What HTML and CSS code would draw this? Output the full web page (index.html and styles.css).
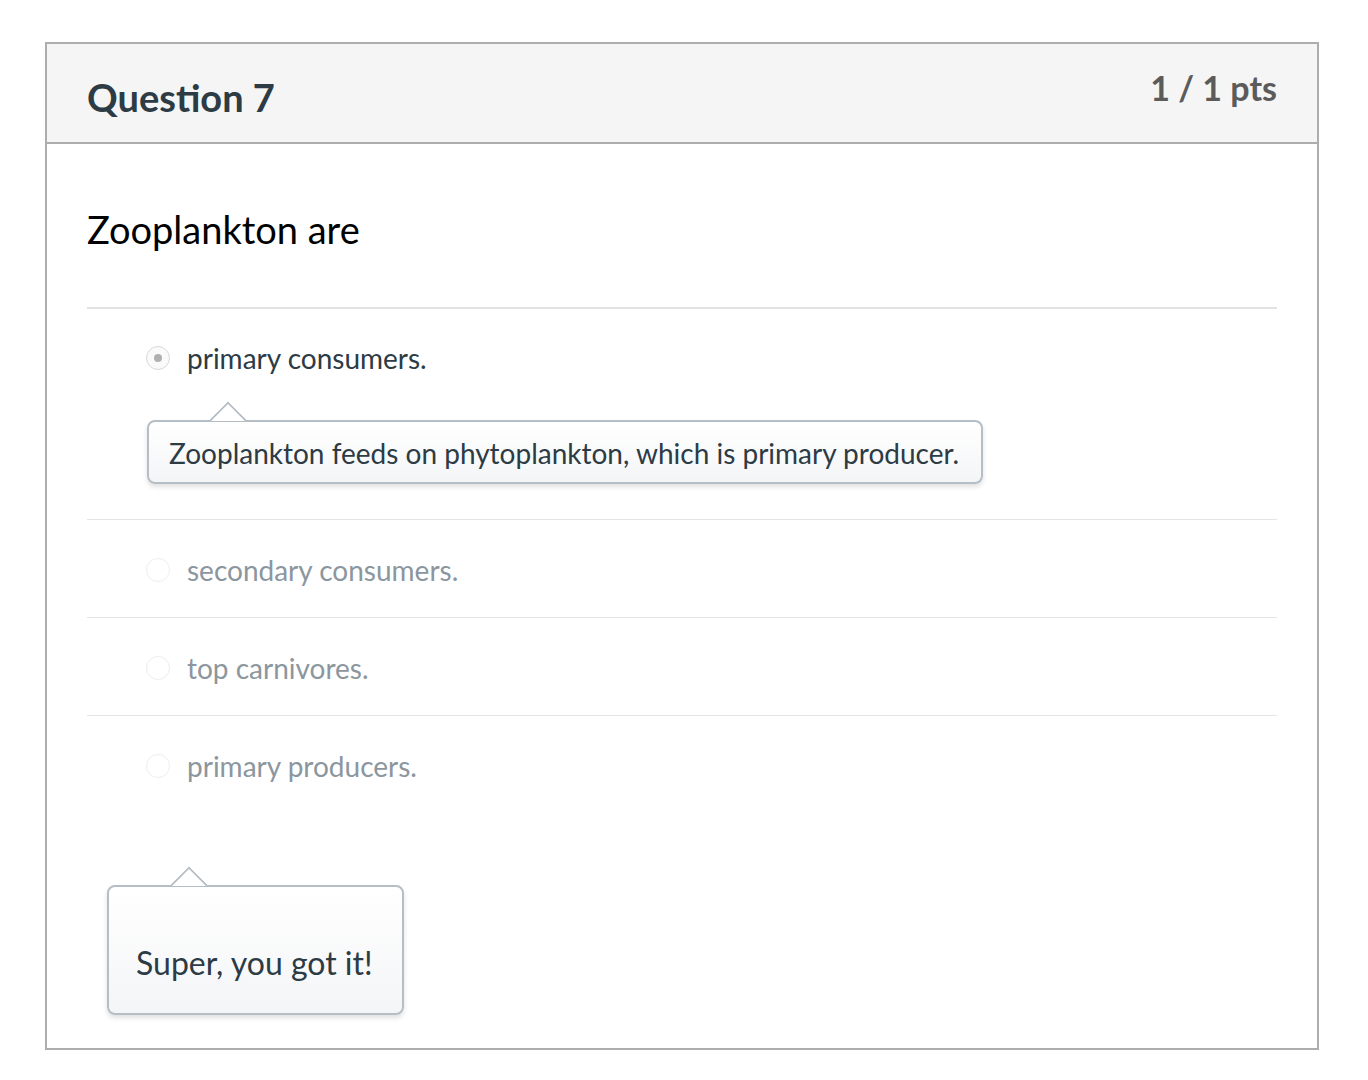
FILE: index.html
```html
<!DOCTYPE html>
<html>
<head>
<meta charset="utf-8">
<link rel="stylesheet" href="styles.css">
</head>
<body>
<div class="question">
  <div class="q-header">
    <h2 class="q-title">Question 7</h2>
    <div class="q-points">1 / 1 pts</div>
  </div>
  <div class="q-body">
    <div class="q-text">Zooplankton are</div>
    <div class="answers">
      <div class="answer selected">
        <div class="answer-row">
          <span class="radio"><span class="dot"></span></span>
          <span class="answer-label">primary consumers.</span>
        </div>
        <div class="bubble comment">
          <span class="arrow"></span>
          Zooplankton feeds on phytoplankton, which is primary producer.
        </div>
      </div>
      <div class="answer">
        <div class="answer-row">
          <span class="radio"></span>
          <span class="answer-label">secondary consumers.</span>
        </div>
      </div>
      <div class="answer">
        <div class="answer-row">
          <span class="radio"></span>
          <span class="answer-label">top carnivores.</span>
        </div>
      </div>
      <div class="answer last">
        <div class="answer-row">
          <span class="radio"></span>
          <span class="answer-label">primary producers.</span>
        </div>
      </div>
    </div>
    <div class="bubble feedback">
      <span class="arrow"></span>
      Super, you got it!
    </div>
  </div>
</div>
</body>
</html>
```

FILE: styles.css
```css
html, body {
  margin: 0;
  padding: 0;
  background: #ffffff;
}
body {
  font-family: Lato, "Noto Sans", sans-serif;
  color: #2d3b45;
}
.question {
  margin: 42px 0 0 45px;
  width: 1270px;
  border: 2px solid #adadad;
}
.q-header {
  display: flex;
  justify-content: space-between;
  align-items: flex-start;
  background: #f5f5f5;
  border-bottom: 2px solid #adadad;
  height: 98px;
  padding: 0 40px;
}
.q-title {
  margin: 0;
  padding-top: 30px;
  font-size: 38px;
  line-height: 46px;
  font-weight: 700;
  color: #2d3b45;
}
.q-points {
  padding-top: 24px;
  font-size: 34px;
  line-height: 40px;
  font-weight: 700;
  color: #5b5b5b;
}
.q-body {
  padding: 0 40px 33px 40px;
}
.q-text {
  padding-top: 62px;
  padding-bottom: 55px;
  font-size: 38px;
  line-height: 46px;
  color: #000000;
  border-bottom: 2px solid #e2e2e2;
}
.answer {
  border-bottom: 1px solid #e4e4e4;
  padding: 33px 0 30px 0;
}
.answer.selected {
  padding-top: 32px;
  padding-bottom: 35px;
}
.answer.last {
  border-bottom: none;
}
.answer-row {
  display: flex;
  align-items: center;
  padding-left: 59px;
  height: 34px;
}
.radio {
  width: 22px;
  height: 22px;
  border-radius: 50%;
  border: 1px solid #eeeeee;
  background: #ffffff;
  display: flex;
  align-items: center;
  justify-content: center;
  margin-right: 17px;
  flex: none;
}
.selected .radio {
  border-color: #d9d9d9;
  background: #fafafa;
}
.dot {
  width: 8px;
  height: 8px;
  border-radius: 50%;
  background: #b0b0b0;
}
.answer-label {
  font-size: 28px;
  line-height: 34px;
  color: #8b969e;
}
.selected .answer-label {
  color: #2d3b45;
}
.bubble {
  position: relative;
  display: inline-block;
  border: 2px solid #b5bec5;
  border-radius: 8px;
  background: linear-gradient(#ffffff, #f4f5f7);
  box-shadow: 0 3px 5px rgba(0, 0, 0, 0.12);
  color: #2d3b45;
}
.arrow {
  position: absolute;
  top: -15px;
  width: 26px;
  height: 26px;
  background: #ffffff;
  border-left: 2px solid #b5bec5;
  border-top: 2px solid #b5bec5;
  transform: rotate(45deg);
  transform-origin: center;
  clip-path: polygon(0 0, 100% 0, 0 100%);
}
.comment {
  margin: 45px 0 0 60px;
  padding: 14px 22px 12px 20px;
  font-size: 28px;
  line-height: 34px;
}
.comment .arrow {
  left: 65px;
}
.feedback {
  margin: 72px 0 0 20px;
  padding: 56px 29px 30px 27px;
  font-size: 32px;
  line-height: 40px;
}
.feedback .arrow {
  left: 66px;
}
```
